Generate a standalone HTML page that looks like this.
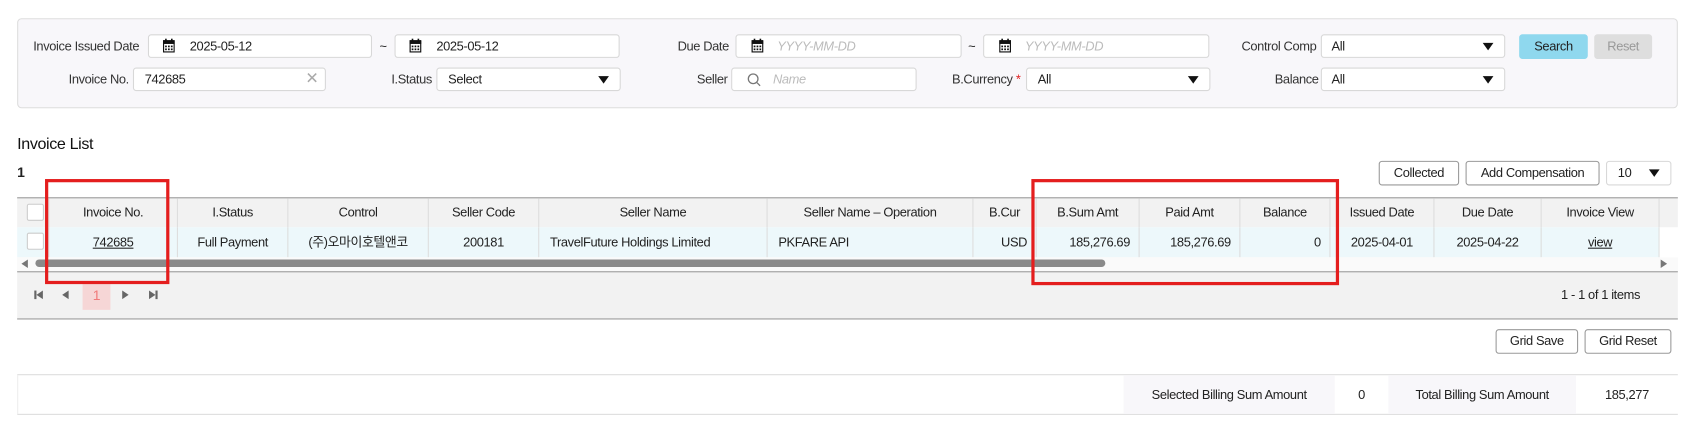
<!DOCTYPE html>
<html><head><meta charset="utf-8"><style>
*{box-sizing:border-box;margin:0;padding:0}
html,body{width:1681px;height:425px;overflow:hidden;background:#fff}
#w{position:absolute;left:0;top:0;width:1568px;height:397px;transform:scale(1.0721);transform-origin:0 0;font-family:"Liberation Sans","Noto Sans CJK KR",sans-serif;font-size:12px;color:#222;letter-spacing:-0.35px}
.a{position:absolute}
.lbl{position:absolute;font-size:12px;color:#333;text-align:right;white-space:nowrap}
.inp{position:absolute;height:22px;background:#fff;border:1px solid #d8d8d8;border-radius:3px;font-size:12px;line-height:20px;padding-left:10px;white-space:nowrap}
.ph{color:#bbb;font-style:italic}
.arr{position:absolute;right:10px;top:7px;width:0;height:0;border-left:5px solid transparent;border-right:5px solid transparent;border-top:7px solid #111}
.cal{position:absolute;top:4px;width:11px;height:13px}
.btn{position:absolute;height:23px;border:1px solid #999;border-radius:3px;background:#fff;font-size:12px;line-height:21px;text-align:center}
.hd{position:absolute;top:184px;left:16px;height:28px;background:#f2f2f2;border-top:1px solid #999;width:1549px}
.cell{position:absolute;top:0;height:100%;border-right:1px solid #ddd;text-align:center;font-size:12px;white-space:nowrap}
.row{position:absolute;top:212px;left:16px;height:28px;width:1532px;background:#edf8fb}
.red{position:absolute;border:3px solid #e41e1e}
.cb{position:absolute;left:9px;top:5px;width:16px;height:16px;background:#fff;border:1px solid #ccc;border-radius:2px}
</style></head><body><div id="w">
<div class="a" style="left:16px;top:17px;width:1549px;height:84px;background:#f8f7fa;border:1px solid #ddd;border-radius:4px"></div>

<div class="lbl" style="left:31px;top:36px">Invoice Issued Date</div>
<div class="inp" style="left:138px;top:32px;width:209px;padding-left:38px">2025-05-12</div>
<svg class="cal" style="left:152px;top:36px" viewBox="0 0 11 13"><rect x="0.5" y="2" width="10" height="10.5" fill="#fff" stroke="#111" stroke-width="1.2"/><rect x="0" y="2" width="11" height="3" fill="#111"/><rect x="2" y="0" width="1.5" height="3" fill="#111"/><rect x="7.5" y="0" width="1.5" height="3" fill="#111"/><g fill="#111"><rect x="2" y="6.5" width="1.6" height="1.6"/><rect x="4.7" y="6.5" width="1.6" height="1.6"/><rect x="7.4" y="6.5" width="1.6" height="1.6"/><rect x="2" y="9.2" width="1.6" height="1.6"/><rect x="4.7" y="9.2" width="1.6" height="1.6"/><rect x="7.4" y="9.2" width="1.6" height="1.6"/></g></svg>
<div class="a" style="left:354px;top:36px">~</div>
<div class="inp" style="left:368px;top:32px;width:210px;padding-left:38px">2025-05-12</div>
<svg class="cal" style="left:382px;top:36px" viewBox="0 0 11 13"><rect x="0.5" y="2" width="10" height="10.5" fill="#fff" stroke="#111" stroke-width="1.2"/><rect x="0" y="2" width="11" height="3" fill="#111"/><rect x="2" y="0" width="1.5" height="3" fill="#111"/><rect x="7.5" y="0" width="1.5" height="3" fill="#111"/><g fill="#111"><rect x="2" y="6.5" width="1.6" height="1.6"/><rect x="4.7" y="6.5" width="1.6" height="1.6"/><rect x="7.4" y="6.5" width="1.6" height="1.6"/><rect x="2" y="9.2" width="1.6" height="1.6"/><rect x="4.7" y="9.2" width="1.6" height="1.6"/><rect x="7.4" y="9.2" width="1.6" height="1.6"/></g></svg>

<div class="lbl" style="left:632px;top:36px">Due Date</div>
<div class="inp ph" style="left:686px;top:32px;width:211px;padding-left:38px">YYYY-MM-DD</div>
<svg class="cal" style="left:701px;top:36px" viewBox="0 0 11 13"><rect x="0.5" y="2" width="10" height="10.5" fill="#fff" stroke="#111" stroke-width="1.2"/><rect x="0" y="2" width="11" height="3" fill="#111"/><rect x="2" y="0" width="1.5" height="3" fill="#111"/><rect x="7.5" y="0" width="1.5" height="3" fill="#111"/><g fill="#111"><rect x="2" y="6.5" width="1.6" height="1.6"/><rect x="4.7" y="6.5" width="1.6" height="1.6"/><rect x="7.4" y="6.5" width="1.6" height="1.6"/><rect x="2" y="9.2" width="1.6" height="1.6"/><rect x="4.7" y="9.2" width="1.6" height="1.6"/><rect x="7.4" y="9.2" width="1.6" height="1.6"/></g></svg>
<div class="a" style="left:903px;top:36px">~</div>
<div class="inp ph" style="left:917px;top:32px;width:211px;padding-left:38px">YYYY-MM-DD</div>
<svg class="cal" style="left:932px;top:36px" viewBox="0 0 11 13"><rect x="0.5" y="2" width="10" height="10.5" fill="#fff" stroke="#111" stroke-width="1.2"/><rect x="0" y="2" width="11" height="3" fill="#111"/><rect x="2" y="0" width="1.5" height="3" fill="#111"/><rect x="7.5" y="0" width="1.5" height="3" fill="#111"/><g fill="#111"><rect x="2" y="6.5" width="1.6" height="1.6"/><rect x="4.7" y="6.5" width="1.6" height="1.6"/><rect x="7.4" y="6.5" width="1.6" height="1.6"/><rect x="2" y="9.2" width="1.6" height="1.6"/><rect x="4.7" y="9.2" width="1.6" height="1.6"/><rect x="7.4" y="9.2" width="1.6" height="1.6"/></g></svg>

<div class="lbl" style="left:1158px;top:36px">Control Comp</div>
<div class="inp" style="left:1232px;top:32px;width:172px;padding-left:9px">All<span class="arr"></span></div>
<div class="a" style="left:1417px;top:32px;width:64px;height:23px;background:#8fd8ee;border-radius:3px;text-align:center;line-height:23px">Search</div>
<div class="a" style="left:1487px;top:32px;width:54px;height:23px;background:#dedede;border-radius:3px;text-align:center;line-height:23px;color:#999">Reset</div>

<div class="lbl" style="left:64px;top:67px">Invoice No.</div>
<div class="inp" style="left:124px;top:63px;width:180px">742685<span class="a" style="right:6px;top:0;color:#aaa;font-size:15px">✕</span></div>
<div class="lbl" style="left:365px;top:67px">I.Status</div>
<div class="inp" style="left:407px;top:63px;width:172px">Select<span class="arr"></span></div>
<div class="lbl" style="left:650px;top:67px">Seller</div>
<div class="inp ph" style="left:682px;top:63px;width:173px;padding-left:38px">Name</div>
<svg class="a" style="left:697px;top:68px" width="13" height="13" viewBox="0 0 13 13"><circle cx="5.5" cy="5.5" r="4.5" fill="none" stroke="#777" stroke-width="1.2"/><line x1="9" y1="9" x2="12" y2="12" stroke="#777" stroke-width="1.2"/></svg>
<div class="lbl" style="left:888px;top:67px">B.Currency <span style="color:#e02020">*</span></div>
<div class="inp" style="left:957px;top:63px;width:172px">All<span class="arr"></span></div>
<div class="lbl" style="left:1189px;top:67px">Balance</div>
<div class="inp" style="left:1232px;top:63px;width:172px;padding-left:9px">All<span class="arr"></span></div>

<div class="a" style="left:16px;top:126px;font-size:15px;color:#111">Invoice List</div>
<div class="a" style="left:16px;top:153px;font-weight:bold;font-size:13px">1</div>
<div class="btn" style="left:1286px;top:150px;width:75px">Collected</div>
<div class="btn" style="left:1367px;top:150px;width:125px">Add Compensation</div>
<div class="inp" style="left:1498px;top:150px;width:61px;height:23px;line-height:21px">10<span class="arr"></span></div>

<div class="hd">
<div class="cb"></div>
<div class="cell" style="left:0;width:30px"></div>
<div class="cell" style="left:30px;width:120px;line-height:27px">Invoice No.</div>
<div class="cell" style="left:150px;width:103px;line-height:27px">I.Status</div>
<div class="cell" style="left:253px;width:131px;line-height:27px">Control</div>
<div class="cell" style="left:384px;width:103px;line-height:27px">Seller Code</div>
<div class="cell" style="left:487px;width:213px;line-height:27px">Seller Name</div>
<div class="cell" style="left:700px;width:192px;line-height:27px">Seller Name – Operation</div>
<div class="cell" style="left:892px;width:59px;line-height:27px">B.Cur</div>
<div class="cell" style="left:951px;width:96px;line-height:27px">B.Sum Amt</div>
<div class="cell" style="left:1047px;width:94px;line-height:27px">Paid Amt</div>
<div class="cell" style="left:1141px;width:84px;line-height:27px">Balance</div>
<div class="cell" style="left:1225px;width:97px;line-height:27px">Issued Date</div>
<div class="cell" style="left:1322px;width:100px;line-height:27px">Due Date</div>
<div class="cell" style="left:1422px;width:110px;line-height:27px">Invoice View</div>
</div>
<div class="row">
<div class="cb"></div>
<div class="cell" style="left:0;width:30px"></div>
<div class="cell" style="left:30px;width:120px;line-height:28px;text-decoration:underline">742685</div>
<div class="cell" style="left:150px;width:103px;line-height:28px">Full Payment</div>
<div class="cell" style="left:253px;width:131px;line-height:28px">(주)오마이호텔앤코</div>
<div class="cell" style="left:384px;width:103px;line-height:28px">200181</div>
<div class="cell" style="left:487px;width:213px;line-height:28px;text-align:left;padding-left:10px">TravelFuture Holdings Limited</div>
<div class="cell" style="left:700px;width:192px;line-height:28px;text-align:left;padding-left:10px">PKFARE API</div>
<div class="cell" style="left:892px;width:59px;line-height:28px;text-align:right;padding-right:8px">USD</div>
<div class="cell" style="left:951px;width:96px;line-height:28px;text-align:right;padding-right:8px">185,276.69</div>
<div class="cell" style="left:1047px;width:94px;line-height:28px;text-align:right;padding-right:8px">185,276.69</div>
<div class="cell" style="left:1141px;width:84px;line-height:28px;text-align:right;padding-right:8px">0</div>
<div class="cell" style="left:1225px;width:97px;line-height:28px">2025-04-01</div>
<div class="cell" style="left:1322px;width:100px;line-height:28px">2025-04-22</div>
<div class="cell" style="left:1422px;width:110px;line-height:28px;text-decoration:underline">view</div>
</div>
<div class="a" style="left:1548px;top:212px;width:17px;height:28px;background:#fff"></div>
<div class="a" style="left:16px;top:240px;width:1549px;height:13px;background:#fafafa"></div>
<div class="a" style="left:20px;top:242px;width:0;height:0;border-top:4px solid transparent;border-bottom:4px solid transparent;border-right:6px solid #777"></div>
<div class="a" style="left:33px;top:242px;width:998px;height:7px;background:#8a8a8a;border-radius:4px"></div>
<div class="a" style="left:1549px;top:242px;width:0;height:0;border-top:4px solid transparent;border-bottom:4px solid transparent;border-left:6px solid #777"></div>
<div class="a" style="left:16px;top:253px;width:1549px;height:45px;background:#f2f2f2;border-top:1px solid #999;border-bottom:1px solid #999"></div>
<div class="a" style="left:32px;top:271px;width:1.5px;height:8px;background:#666"></div>
<div class="a" style="left:34px;top:271px;width:0;height:0;border-top:4px solid transparent;border-bottom:4px solid transparent;border-right:6px solid #666"></div>
<div class="a" style="left:58px;top:271px;width:0;height:0;border-top:4px solid transparent;border-bottom:4px solid transparent;border-right:6px solid #666"></div>
<div class="a" style="left:77px;top:263px;width:26px;height:26px;background:#f6d6d6;color:#f07a7a;text-align:center;line-height:26px;font-size:13px">1</div>
<div class="a" style="left:114px;top:271px;width:0;height:0;border-top:4px solid transparent;border-bottom:4px solid transparent;border-left:6px solid #666"></div>
<div class="a" style="left:139px;top:271px;width:0;height:0;border-top:4px solid transparent;border-bottom:4px solid transparent;border-left:6px solid #666"></div>
<div class="a" style="left:145px;top:271px;width:1.5px;height:8px;background:#666"></div>
<div class="a" style="left:1456px;top:268px;font-size:12px">1 - 1 of 1 items</div>

<div class="red" style="left:42px;top:167px;width:116px;height:98px"></div>
<div class="red" style="left:962px;top:167px;width:287px;height:99px"></div>

<div class="btn" style="left:1395px;top:307px;width:77px">Grid Save</div>
<div class="btn" style="left:1478px;top:307px;width:81px">Grid Reset</div>

<div class="a" style="left:16px;top:349px;width:1549px;height:38px;border-top:1px solid #ddd;border-bottom:1px solid #ddd;border-left:1px solid #eee"></div>
<div class="a" style="left:1048px;top:350px;width:197px;height:36px;background:#f8f7fa;line-height:36px;text-align:center">Selected Billing Sum Amount</div>
<div class="a" style="left:1245px;top:350px;width:50px;height:36px;line-height:36px;text-align:center">0</div>
<div class="a" style="left:1295px;top:350px;width:175px;height:36px;background:#f8f7fa;line-height:36px;text-align:center">Total Billing Sum Amount</div>
<div class="a" style="left:1470px;top:350px;width:95px;height:36px;line-height:36px;text-align:center">185,277</div>
</div></body></html>
